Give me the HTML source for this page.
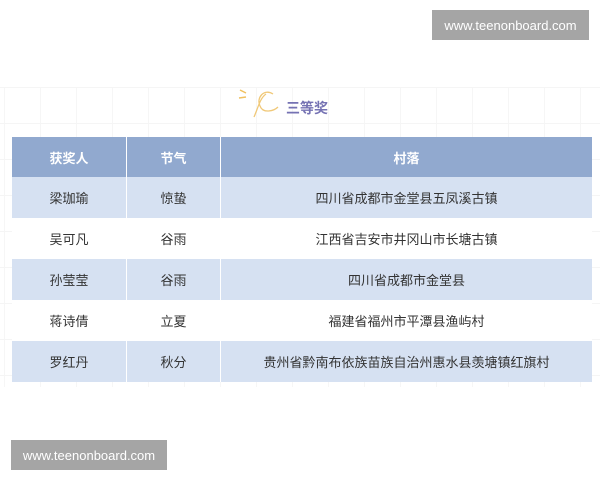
<!DOCTYPE html>
<html><head><meta charset="utf-8"><style>
body{margin:0;width:600px;height:480px;background:#fff;position:relative;overflow:hidden;font-family:"Liberation Sans","Noto Sans CJK SC",sans-serif}
.grid{position:absolute;left:0;top:87px;width:600px;height:300px;background-image:linear-gradient(#f5f5f5 1px,transparent 1px),linear-gradient(90deg,#f6f6f6 1px,transparent 1px);background-size:36px 36px;background-position:0 0,4px 0}
.wm{position:absolute;background:#a5a5a5;color:#fff;font-size:13px;display:flex;align-items:center;justify-content:center}
table{position:absolute;left:12px;top:137px;width:580px;border-collapse:collapse;font-size:13px;color:#333}
td,th{text-align:center;border-left:1px solid #fff;padding:0}
th{background:#91a9cf;color:#fff;height:40px;font-weight:bold}
tr.b td{background:#d6e1f2}
tr.w td{background:#fff}
td{height:41px}
</style></head><body>
<div class="grid"></div>
<div class="wm" style="left:432px;top:10px;width:157px;height:30px">www.teenonboard.com</div>
<div class="wm" style="left:11px;top:440px;width:156px;height:30px">www.teenonboard.com</div>
<svg style="position:absolute;left:236px;top:86px" width="60" height="40"><path d="M4 4 L10 7 M3 12 L10 11" stroke="#f0c060" stroke-width="1.5" fill="none"/><path d="M37 8 C28 2 20 12 24 20 C27 28 38 25 42 21 M30 8 C24 12 22 22 18 31" stroke="#f0c878" stroke-width="1.3" fill="none"/></svg>
<div style="position:absolute;left:286px;top:98px;font-size:14px;font-weight:bold;color:#7572b3">三等奖</div>
<table>
<tr><th style="width:114px;border-left:none">获奖人</th><th style="width:93px">节气</th><th>村落</th></tr>
<tr class="b"><td style="border-left:none">梁珈瑜</td><td>惊蛰</td><td>四川省成都市金堂县五凤溪古镇</td></tr>
<tr class="w"><td style="border-left:none">吴可凡</td><td>谷雨</td><td>江西省吉安市井冈山市长塘古镇</td></tr>
<tr class="b"><td style="border-left:none">孙莹莹</td><td>谷雨</td><td>四川省成都市金堂县</td></tr>
<tr class="w"><td style="border-left:none">蒋诗倩</td><td>立夏</td><td>福建省福州市平潭县渔屿村</td></tr>
<tr class="b"><td style="border-left:none">罗红丹</td><td>秋分</td><td>贵州省黔南布依族苗族自治州惠水县羡塘镇红旗村</td></tr>
</table>
</body></html>
